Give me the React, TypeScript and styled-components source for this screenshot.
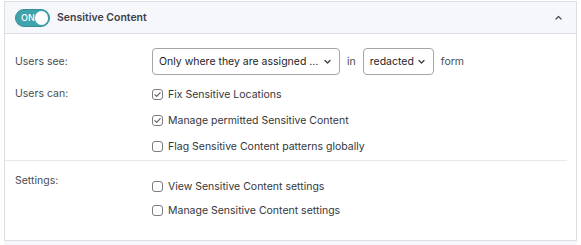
import React from 'react';
import styled, { createGlobalStyle } from 'styled-components';

const GlobalStyle = createGlobalStyle`
  html, body {
    margin: 0;
    padding: 0;
    background: #ffffff;
  }
  body {
    font-family: Inter, "Noto Sans", sans-serif;
    font-size: 10.5px;
    color: #333;
  }
`;

const Page = styled.div`
  padding: 1px 4px 0 4px;
`;

const Panel = styled.div`
  border: 1px solid #dcdee4;
  border-bottom: none;
  background: #fff;
`;

const Header = styled.div`
  height: 31px;
  display: flex;
  align-items: center;
  padding: 0 14px 0 10px;
  background: #f6f7fa;
  border-bottom: 1px solid #dcdee4;
`;

const Toggle = styled.div<{ $on: boolean }>`
  width: 35px;
  height: 18px;
  border-radius: 9px;
  box-sizing: border-box;
  background: ${(p) => (p.$on ? '#3fa3ab' : '#c5c8cf')};
  border: 1px solid ${(p) => (p.$on ? '#358f96' : '#b5b8bf')};
  display: flex;
  align-items: center;
  justify-content: space-between;
  padding: 0 1px 0 5px;
  color: #fff;
  font-size: 9px;
  font-weight: 500;
`;

const Knob = styled.span`
  width: 14px;
  height: 14px;
  border-radius: 50%;
  background: #fff;
`;

const Title = styled.span`
  margin-left: 7px;
  font-weight: 600;
  font-size: 10.5px;
  color: #3d4047;
  flex: 1;
`;

const Section = styled.div<{ $top: number; $bottom: number; $divider?: boolean }>`
  display: grid;
  grid-template-columns: 137px 1fr;
  padding: ${(p) => p.$top}px 0 ${(p) => p.$bottom}px 10px;
  margin-right: 9px;
  border-bottom: ${(p) => (p.$divider ? '1px solid #e6e8ec' : 'none')};
  row-gap: 6px;
`;

const Label = styled.div<{ $lh: number }>`
  color: #4a4c52;
  line-height: ${(p) => p.$lh}px;
`;

const SeeRow = styled.div`
  display: flex;
  align-items: center;
  gap: 6px;
  color: #4a4c52;
`;

const Select = styled.div<{ $width?: number }>`
  width: ${(p) => (p.$width ? `${p.$width}px` : 'auto')};
  flex: none;
  height: 27px;
  box-sizing: border-box;
  border: 1px solid #a3a5aa;
  border-radius: 4px;
  display: flex;
  align-items: center;
  justify-content: space-between;
  gap: 4px;
  padding: 0 8px 0 6px;
  color: #23252a;
  font-size: 10.5px;
  white-space: nowrap;
`;

const Word = styled.span`
  margin: 0 1px;
`;

const Checks = styled.div<{ $item: number }>`
  display: flex;
  flex-direction: column;

  & > label {
    height: ${(p) => p.$item}px;
  }
`;

const CheckRow = styled.label`
  display: flex;
  align-items: center;
  gap: 5px;
  color: #34363b;
`;

const Box = styled.span`
  width: 11px;
  height: 11px;
  box-sizing: border-box;
  border: 1px solid #7a7c82;
  border-radius: 3px;
  display: flex;
  align-items: center;
  justify-content: center;
`;

const NextHeader = styled.div`
  height: 6px;
  border-top: 1px solid #dcdee4;
  background: #f6f7fa;
`;

const Chevron: React.FC<{ up?: boolean }> = ({ up }) => (
  <svg width="7" height="5" viewBox="0 0 7 5" fill="none">
    <path
      d={up ? 'M1 4L3.5 1.5L6 4' : 'M1 1.5L3.5 4L6 1.5'}
      stroke={up ? '#4b4e55' : '#3a3c41'}
      strokeWidth="1.3"
      strokeLinecap="round"
      strokeLinejoin="round"
    />
  </svg>
);

const Check: React.FC<{ label: string; checked?: boolean }> = ({ label, checked }) => (
  <CheckRow>
    <Box>
      {checked && (
        <svg width="9" height="9" viewBox="0 0 9 9" fill="none">
          <path d="M1.8 4.6L3.7 6.4L7.2 2.6" stroke="#5c5f66" strokeWidth="1.1" strokeLinecap="round" strokeLinejoin="round" />
        </svg>
      )}
    </Box>
    {label}
  </CheckRow>
);

export default function App() {
  return (
    <Page>
      <GlobalStyle />
      <Panel>
        <Header>
          <Toggle $on>
            ON
            <Knob />
          </Toggle>
          <Title>Sensitive Content</Title>
          <Chevron up />
        </Header>

        <Section $top={14} $bottom={1} $divider>
          <Label $lh={27}>Users see:</Label>
          <SeeRow>
            <Select $width={188}>
              <span>Only where they are assigned ...</span>
              <Chevron />
            </Select>
            <Word>in</Word>
            <Select>
              <span>redacted</span>
              <Chevron />
            </Select>
            <Word>form</Word>
          </SeeRow>
          <Label $lh={26}>Users can:</Label>
          <Checks $item={26}>
            <Check label="Fix Sensitive Locations" checked />
            <Check label="Manage permitted Sensitive Content" checked />
            <Check label="Flag Sensitive Content patterns globally" />
          </Checks>
        </Section>

        <Section $top={13} $bottom={18}>
          <Label $lh={14}>Settings:</Label>
          <Checks $item={24}>
            <Check label="View Sensitive Content settings" />
            <Check label="Manage Sensitive Content settings" />
          </Checks>
        </Section>
      </Panel>
      <NextHeader />
    </Page>
  );
}
